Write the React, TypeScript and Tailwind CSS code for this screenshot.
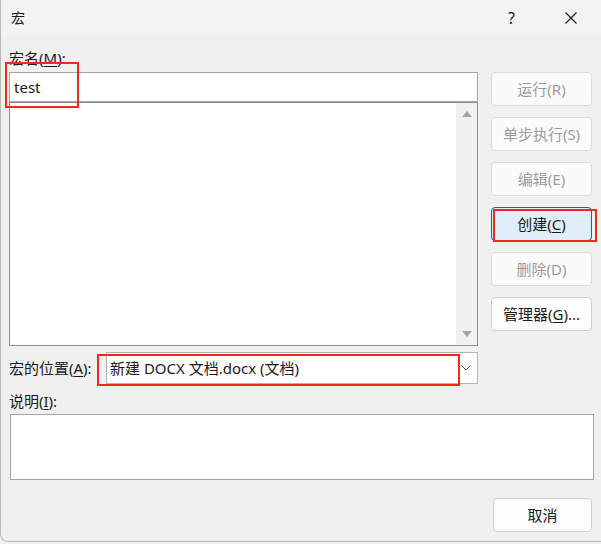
import React from 'react';

const FONT = { fontFamily: '"Noto Sans", "Noto Sans CJK SC", sans-serif' };

function Mn({ children }: { children: React.ReactNode }) {
    return <span className="underline underline-offset-2 decoration-1">{children}</span>;
}

function DlgButton({ children, disabled, active }: { children: React.ReactNode; disabled?: boolean; active?: boolean }) {
    let cls = 'bg-[#fdfdfd] border-[#d0d0d0] text-[#1a1a1a]';
    if (disabled) cls = 'bg-[#fbfbfb] border-[#dcdcdc] text-[#9b9b9b]';
    if (active) cls = 'bg-[#e0eef9] border-[#0067c0] text-[#1a1a1a]';
    return (
        <div className={`h-[34px] w-[101px] flex items-center justify-center rounded-[4px] border text-[15px] leading-[20px] whitespace-nowrap ${cls}`}>
            {children}
        </div>
    );
}

export default function App() {
    return (
        <div className="relative w-[601px] h-[544px] bg-[#f0f0f0] overflow-hidden" style={FONT}>
            <div className="h-[542px] border-l border-b border-[#b9b9b9] rounded-bl-[8px] flex flex-col">
                {/* title bar */}
                <div className="h-[36px] bg-[#f3f3f3] flex items-center text-[#1a1a1a]">
                    <span className="ml-[10px] text-[14px] leading-[20px]">宏</span>
                    <span className="ml-auto mr-[50px] text-[16px] leading-[20px]">?</span>
                    <svg width="12" height="12" viewBox="0 0 12 12" className="mr-[24px]">
                        <path d="M0.5 0.5 L11.5 11.5 M11.5 0.5 L0.5 11.5" stroke="#1a1a1a" strokeWidth="1.1" fill="none" />
                    </svg>
                </div>

                <div className="flex flex-col pl-[8px] text-[15px] leading-[20px] text-[#1a1a1a]">
                    <div className="mt-[12px] h-[20px]">宏名(<Mn>M</Mn>):</div>

                    <div className="mt-[4px] flex items-start">
                        <div className="w-[469px] flex flex-col">
                            <div className="h-[30px] bg-white border border-[#a5a5a5] flex items-center pl-[4px] text-[15px]">test</div>
                            <div className="h-[244px] bg-white border border-[#8f8f8f] flex justify-end">
                                <div className="w-[21px] bg-[#f0f0f0] flex flex-col items-center justify-between py-[8px]">
                                    <svg width="10" height="6" viewBox="0 0 10 6">
                                        <path d="M5 0 L10 6 L0 6 Z" fill="#a3a3a3" />
                                    </svg>
                                    <svg width="10" height="6" viewBox="0 0 10 6">
                                        <path d="M0 0 L10 0 L5 6 Z" fill="#a3a3a3" />
                                    </svg>
                                </div>
                            </div>
                        </div>

                        <div className="ml-[13px] flex flex-col gap-[11px]">
                            <DlgButton disabled>运行(R)</DlgButton>
                            <DlgButton disabled>单步执行(S)</DlgButton>
                            <DlgButton disabled>编辑(E)</DlgButton>
                            <DlgButton active>创建(<Mn>C</Mn>)</DlgButton>
                            <DlgButton disabled>删除(D)</DlgButton>
                            <DlgButton>管理器(<Mn>G</Mn>)...</DlgButton>
                        </div>
                    </div>

                    <div className="mt-[6px] flex items-center">
                        <div className="w-[97px] whitespace-nowrap">宏的位置(<Mn>A</Mn>):</div>
                        <div className="w-[372px] h-[32px] bg-white border border-[#b4b4b4] flex items-center">
                            <span className="pl-[3px] text-[15px] whitespace-nowrap">新建 DOCX 文档.docx (文档)</span>
                            <svg width="10" height="6" viewBox="0 0 10 6" className="ml-auto mr-[6px]">
                                <path d="M0.5 0.5 L5 5 L9.5 0.5" stroke="#5f5f5f" strokeWidth="1" fill="none" />
                            </svg>
                        </div>
                    </div>

                    <div className="mt-[7px] h-[20px]">说明(<Mn>I</Mn>):</div>
                    <div className="mt-[3px] ml-[1px] w-[584px] h-[66px] bg-white border border-[#a5a5a5]" />

                    <div className="mt-[18px] flex justify-end pr-[9px]">
                        <div className="h-[34px] w-[99px] flex items-center justify-center rounded-[4px] border border-[#d0d0d0] bg-[#fdfdfd] text-[15px]">
                            取消
                        </div>
                    </div>
                </div>
            </div>

            {/* annotation boxes */}
            <div className="absolute left-[5px] top-[62px] w-[74px] h-[46px] border-2 border-[#ee2a1f]" />
            <div className="absolute left-[97px] top-[354px] w-[363px] h-[32px] border-2 border-[#ee2a1f]" />
            <div className="absolute left-[493px] top-[209px] w-[104px] h-[33px] border-2 border-[#ee2a1f]" />
        </div>
    );
}
